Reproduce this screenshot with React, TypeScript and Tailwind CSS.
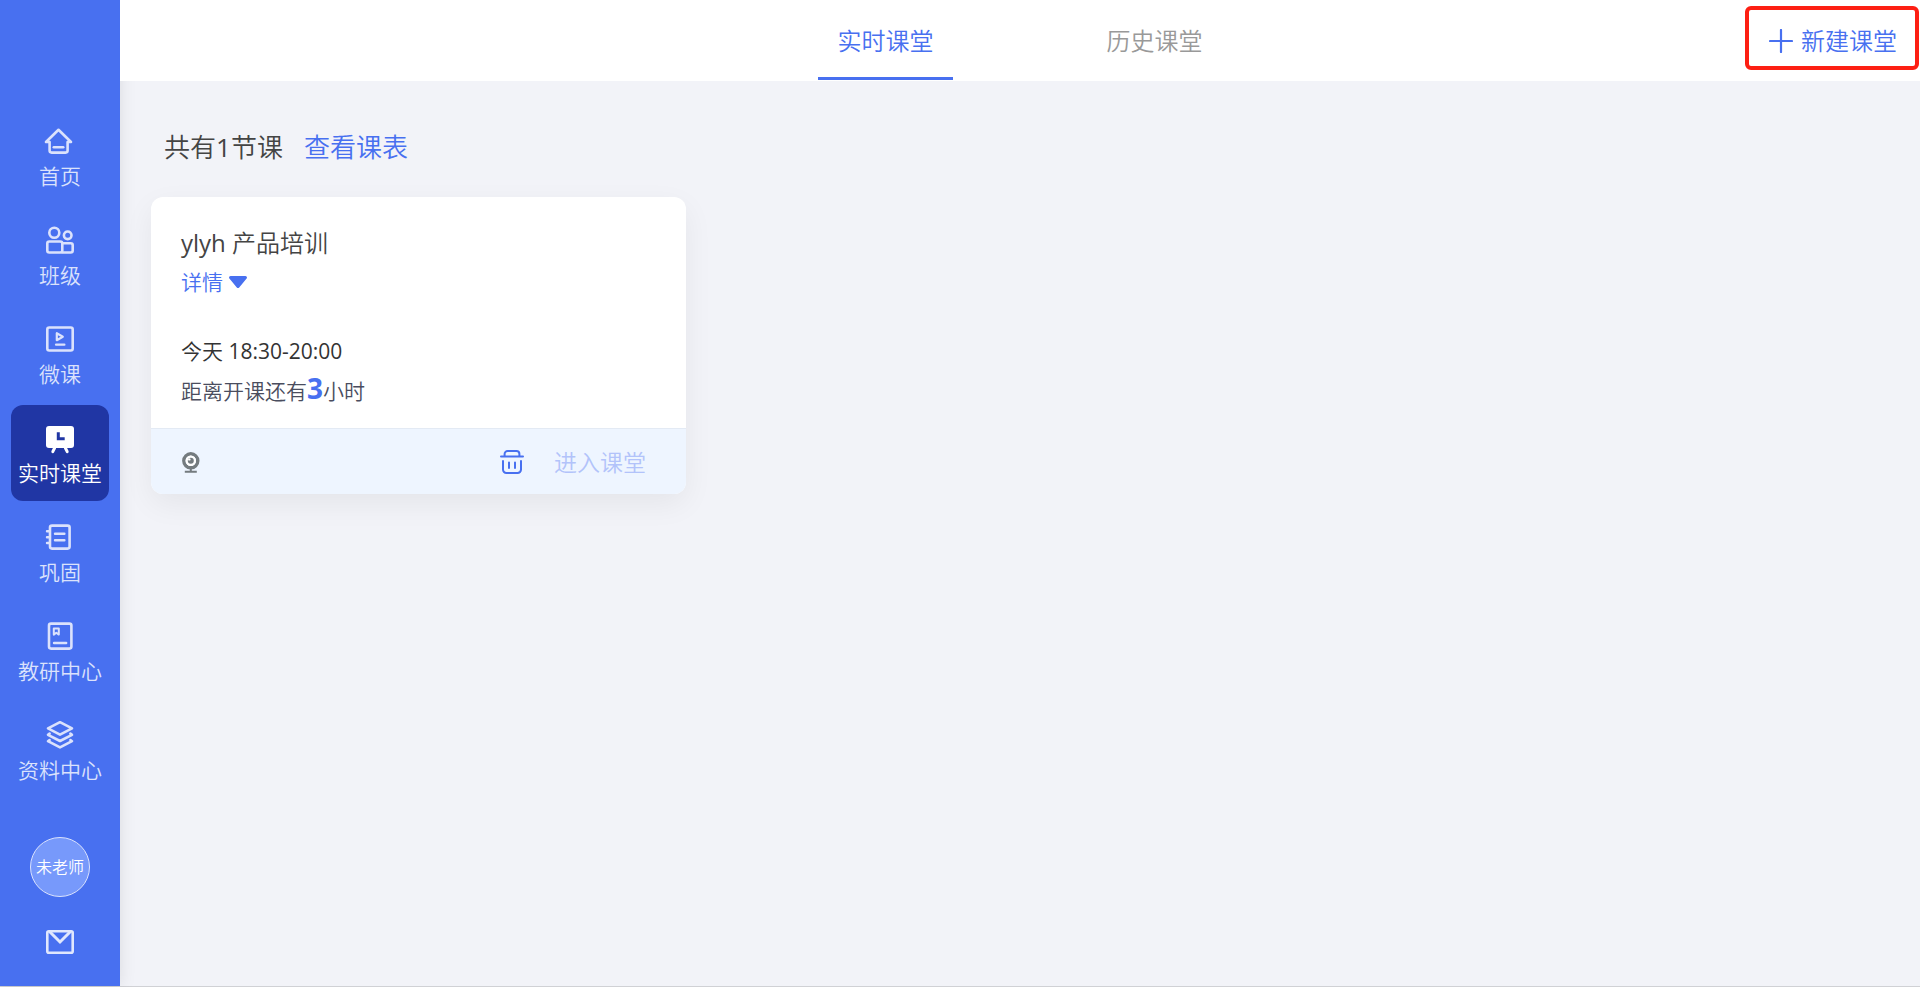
import { useState } from 'react';
import type { ReactNode } from 'react';
import clsx from 'clsx';

const stroke = {
  fill: 'none',
  stroke: 'currentColor',
  strokeWidth: 2.6,
  strokeLinecap: 'round',
  strokeLinejoin: 'round',
} as const;

const NavIcon = ({ children }: { children: ReactNode }) => (
  <svg className="size-8" viewBox="0 0 32 32" aria-hidden="true" {...stroke}>
    {children}
  </svg>
);

const navItems = [
  {
    label: '首页',
    icon: (
      <NavIcon>
        <path d="M14.5 4.8 2 17h3.6v8.6a2 2 0 0 0 2 2h14a2 2 0 0 0 2-2V17H27Z" />
        <path d="M9.8 22.3h9.4" />
      </NavIcon>
    ),
  },
  {
    label: '班级',
    icon: (
      <NavIcon>
        <circle cx="10.3" cy="8.7" r="5" />
        <circle cx="23.7" cy="11.3" r="3.8" />
        <rect x="3.3" y="17.5" width="15" height="11" rx="2" />
        <path d="M18.3 19.2h8.4a2 2 0 0 1 2 2v5.3a2 2 0 0 1-2 2h-8.4" />
      </NavIcon>
    ),
  },
  {
    label: '微课',
    icon: (
      <NavIcon>
        <rect x="3.3" y="4.5" width="25.4" height="23" rx="2" />
        <path d="M12.8 10.2v7l6-3.5Z" strokeWidth={2.2} />
        <path d="M12 21.7h8.4" strokeWidth={2.2} />
      </NavIcon>
    ),
  },
  {
    label: '实时课堂',
    icon: (
      <NavIcon>
        <rect x="2" y="4" width="28" height="22" rx="3" fill="currentColor" stroke="none" />
        <path d="m10.6 26-1.8 3.6M21.4 26l1.8 3.6" strokeWidth={3} />
        <path
          className="stroke-[#2036a4]"
          d="M14.3 10.3v6.4h6.4"
          strokeWidth={3}
          strokeLinecap="butt"
          strokeLinejoin="miter"
        />
      </NavIcon>
    ),
  },
  {
    label: '巩固',
    icon: (
      <NavIcon>
        <rect x="6" y="4.6" width="19.6" height="23" rx="2" />
        <path d="M3 10.3h2M3 16.2h2M3 22h2" strokeWidth={2.4} />
        <path d="M11 12.7h9.4M11 19.3h9.4" strokeWidth={2.4} />
      </NavIcon>
    ),
  },
  {
    label: '教研中心',
    icon: (
      <NavIcon>
        <rect x="5" y="3.6" width="22.4" height="25" rx="2" />
        <path d="M9.8 14.6V8.5h5v6.1l-2.5-1.8Z" strokeWidth={2} />
        <path d="M10 23h12.2" strokeWidth={2.4} />
      </NavIcon>
    ),
  },
  {
    label: '资料中心',
    icon: (
      <NavIcon>
        <path d="m16 3.2 12 6.2-12 6.2-12-6.2Z" />
        <path d="m5.6 14.6-1.6 1.2 12 6.2 12-6.2-1.6-1.2" />
        <path d="m5.6 21-1.6 1.2 12 6.2 12-6.2-1.6-1.2" />
      </NavIcon>
    ),
  },
];

const Sidebar = () => (
  <aside className="relative z-10 flex w-[120px] shrink-0 flex-col items-center bg-[#4870f0] pt-[108px] pb-8 shadow-[0_0_16px_rgba(0,0,0,0.1)]">
    <nav className="flex flex-col gap-[3px]">
      {navItems.map(({ label, icon }) => (
        <a
          key={label}
          href="#"
          className={clsx(
            'flex h-24 w-[98px] flex-col items-center gap-[7px] rounded-xl pt-[17px] text-[21px] leading-6 whitespace-nowrap',
            label === '实时课堂' ? 'bg-[#2036a4] text-white' : 'text-[#dbe2fc]',
          )}
        >
          {icon}
          {label}
        </a>
      ))}
    </nav>
    <button
      type="button"
      className="mt-auto flex size-[60px] items-center justify-center rounded-full border border-[#dbe3fd] bg-[#7799fb] text-base whitespace-nowrap text-white"
    >
      未老师
    </button>
    <button type="button" aria-label="消息" className="mt-[33px] text-[#e0e7fd]">
      <svg className="h-6 w-7" viewBox="0 0 28 24" aria-hidden="true" {...stroke}>
        <rect x="1.3" y="1.3" width="25.4" height="21.4" rx="1.5" />
        <path d="m4 2 10 10L24 2" strokeWidth={3} strokeLinejoin="miter" />
      </svg>
    </button>
  </aside>
);

const tabs = ['实时课堂', '历史课堂'];

const Header = () => {
  const [tab, setTab] = useState(tabs[0]);

  return (
    <header className="relative z-20 flex h-[81px] justify-center gap-[134px] bg-white text-2xl">
      {tabs.map((name) => (
        <button
          key={name}
          type="button"
          onClick={() => setTab(name)}
          className={clsx(
            'mb-px w-[135px] border-b-3 pt-1',
            tab === name
              ? 'border-[#4870f0] text-[#4870f0]'
              : 'border-transparent text-[#999]',
          )}
        >
          {name}
        </button>
      ))}
      <button
        type="button"
        className="absolute top-[6px] right-px flex h-16 items-center gap-2 rounded-md border-4 border-[#fd1f13] pt-[6px] pr-[18px] pl-5 text-[#4870f0]"
      >
        <svg className="size-6" viewBox="0 0 24 24" aria-hidden="true" {...stroke}>
          <path d="M12 1v22M1 12h22" strokeWidth={2.2} />
        </svg>
        新建课堂
      </button>
    </header>
  );
};

const LessonCard = () => (
  <article className="mt-[30px] w-[535px] overflow-hidden rounded-xl bg-white text-[21px] text-[#444] shadow-[0_10px_30px_rgba(0,0,0,0.06)]">
    <div className="px-[30px] pt-[30px] pb-[21px]">
      <h2 className="text-2xl leading-8">
        <span className="font-normal">ylyh </span>
        产品培训
      </h2>
      <button
        type="button"
        className="mt-[11px] flex items-center gap-[6px] leading-6 text-[#4870f0]"
      >
        详情
        <svg className="h-3 w-[18px]" viewBox="0 0 18 12" aria-hidden="true">
          <path
            d="M1.6 0h14.8c1.5 0 2.1 1.8 1 2.8l-7.2 8.6c-.7.8-1.7.8-2.4 0L.6 2.8C-.5 1.8.1 0 1.6 0Z"
            fill="currentColor"
          />
        </svg>
      </button>
      <p className="mt-[45px] leading-6 text-[#333]">
        今天 <time className="font-normal">18:30-20:00</time>
      </p>
      <p className="mt-[11px] leading-8 text-[#4a4d5e]">
        距离开课还有
        <strong className="text-[28px] leading-none font-bold text-[#4870f0]">3</strong>
        小时
      </p>
    </div>
    <footer className="flex h-[66px] items-center border-t border-[#e3eaf4] bg-[#eef5ff] pt-px pr-10 pl-[30px]">
      <svg className="h-[21px] w-5" viewBox="0 0 20 21" fill="none" aria-hidden="true">
        <circle cx="9.8" cy="8.8" r="7" stroke="#747b7f" strokeWidth="3.4" />
        <circle cx="9.8" cy="8.8" r="5.2" fill="#fff" />
        <circle cx="9.8" cy="8.8" r="3" fill="#747b7f" />
        <circle cx="8.3" cy="7.4" r="1.2" fill="#fff" />
        <path d="M9.8 17v3M3.8 19.8h12" stroke="#747b7f" strokeWidth="2" />
      </svg>
      <button type="button" aria-label="删除" className="ml-auto text-[#4870f0]">
        <svg className="size-6" viewBox="0 0 24 24" aria-hidden="true" {...stroke} strokeWidth={2}>
          <path d="M1 6.4h22M4.6 6V4a3 3 0 0 1 3-3h8.8a3 3 0 0 1 3 3v2" />
          <path d="M3 11v8.6A3.4 3.4 0 0 0 6.4 23h11.2a3.4 3.4 0 0 0 3.4-3.4V11M9 12.6V18M15 12.6V18" />
        </svg>
      </button>
      <button type="button" disabled className="ml-[30px] text-[23px] text-[#b2c3fa]">
        进入课堂
      </button>
    </footer>
  </article>
);

function App() {
  return (
    <div className="flex min-h-screen border-b border-[#d0d1d5] bg-[#f2f3f8] font-['Open_Sans','Noto_Sans_CJK_SC',sans-serif] font-[350]">
      <Sidebar />
      <div className="min-w-0 flex-1">
        <Header />
        <main className="px-[31px] pt-[46px]">
          <div className="flex gap-[21px] pl-[13px] text-[26px] leading-10">
            <p className="text-[#444]">
              共有<span className="font-normal">1</span>节课
            </p>
            <a href="#" className="text-[#4870f0]">
              查看课表
            </a>
          </div>
          <LessonCard />
        </main>
      </div>
    </div>
  );
}

export default App;
